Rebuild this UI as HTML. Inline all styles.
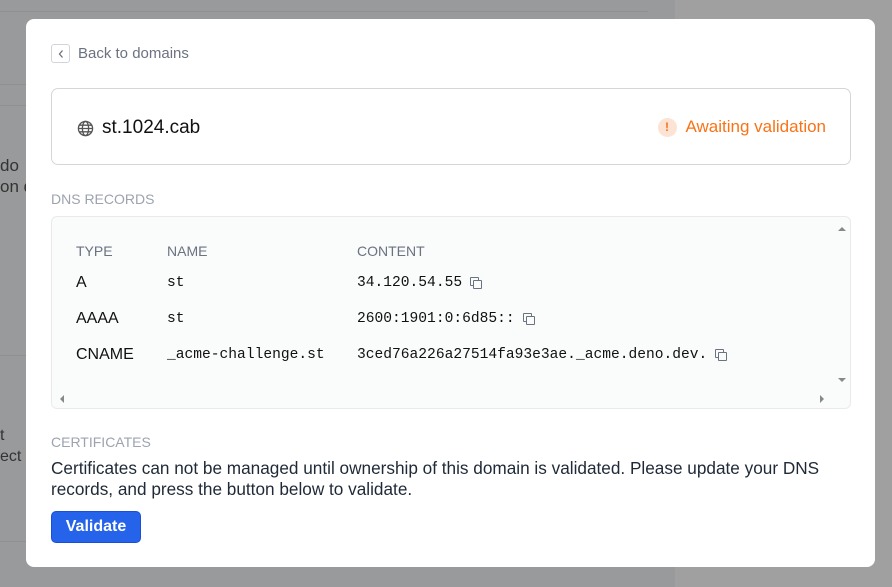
<!DOCTYPE html>
<html><head><style>
*{box-sizing:border-box;margin:0;padding:0}
body{width:892px;height:587px;overflow:hidden;background:#999a9b;font-family:"Liberation Sans",sans-serif;position:relative}
.bgl{position:absolute;background:#8f9091;height:1px;left:0}
.modal{position:absolute;left:26px;top:19px;width:849px;height:548px;background:#fff;border-radius:8px}
.back{position:absolute;left:25px;top:25px;display:flex;align-items:center;color:#6b7280;font-size:15px}
.back .b{width:19px;height:19px;border:1px solid #d1d5db;border-radius:3px;margin-right:8px;display:flex;align-items:center;justify-content:center}
.card{position:absolute;left:25px;top:69px;width:800px;height:77px;border:1px solid #d4d6da;border-radius:7px}
.dom{position:absolute;left:25px;top:28px;display:flex;align-items:center;font-size:19px;color:#111}
.stat{position:absolute;right:24px;top:28px;display:flex;align-items:center;color:#f97316;font-size:17px}
.stat .c{width:19px;height:19px;border-radius:50%;background:#fde3d3;color:#f97316;font-size:12px;font-weight:bold;display:flex;align-items:center;justify-content:center;margin-right:9px}
.lbl{position:absolute;left:25px;color:#9ca3af;font-size:14px}
.tbl{position:absolute;left:25px;top:197px;width:800px;height:193px;background:#fafbfb;border:1px solid #e8eaec;border-radius:6px}
.tbl div{position:absolute;white-space:nowrap}
.h{color:#6b7280;font-size:14px;top:26px}
.m{font-family:"Liberation Mono","DejaVu Sans Mono",monospace;font-size:14.6px;color:#111}
.t{font-size:16px;color:#111}
.cp{display:inline-block;width:10px;height:10px;position:relative;margin-left:8px;vertical-align:-1px}
.cp:before,.cp:after{content:"";position:absolute;width:7px;height:7px;border:1px solid #6b7280;border-radius:1px;background:#fafbfb}
.cp:before{left:0;top:0}.cp:after{left:3px;top:3px}
.tri{position:absolute;width:0;height:0}
p.txt{position:absolute;left:25px;top:439px;width:790px;font-size:17.2px;line-height:21px;color:#1f2937}
.btn{position:absolute;left:25px;top:492px;width:90px;height:32px;background:#2563eb;border:1px solid #1d4ed8;border-radius:5px;color:#fff;font-size:16px;font-weight:bold;display:flex;align-items:center;justify-content:center}
</style></head><body>
<div class="bgl" style="top:11px;width:648px"></div>
<div class="bgl" style="top:84px;width:26px"></div>
<div class="bgl" style="top:105px;width:26px"></div>
<div class="bgl" style="top:355px;width:26px"></div>
<div class="bgl" style="top:541px;width:26px"></div>
<div style="position:absolute;left:675px;top:0;width:217px;height:587px;background:#a0a0a0"></div>
<div style="position:absolute;left:0;top:155px;font-size:17px;color:#333;line-height:21px">do<br>on d</div>
<div style="position:absolute;left:0;top:425px;font-size:16px;color:#333;line-height:21px">t<br>ect t</div>
<div class="modal">
<div class="back"><span class="b"><svg width="8" height="10" viewBox="0 0 8 10"><path d="M5.5 1.5L2.5 5l3 3.5" fill="none" stroke="#6b7280" stroke-width="1.3"/></svg></span>Back to domains</div>
<div class="card">
<div class="dom"><svg width="17" height="17" viewBox="0 0 18 18" style="margin-right:8px"><g fill="none" stroke="#555" stroke-width="1.4"><circle cx="9" cy="9" r="7.5"/><ellipse cx="9" cy="9" rx="3.3" ry="7.5"/><path d="M1.5 9h15M2.5 5.5h13M2.5 12.5h13"/></g></svg>st.1024.cab</div>
<div class="stat"><span class="c">!</span>Awaiting validation</div>
</div>
<div class="lbl" style="top:172px">DNS RECORDS</div>
<div class="tbl">
<div class="h" style="left:24px">TYPE</div><div class="h" style="left:115px">NAME</div><div class="h" style="left:305px">CONTENT</div>
<div class="t" style="left:24px;top:57px">A</div><div class="m" style="left:115px;top:58px">st</div><div class="m" style="left:305px;top:58px">34.120.54.55<span class="cp"></span></div>
<div class="t" style="left:24px;top:93px">AAAA</div><div class="m" style="left:115px;top:94px">st</div><div class="m" style="left:305px;top:94px">2600:1901:0:6d85::<span class="cp"></span></div>
<div class="t" style="left:24px;top:129px">CNAME</div><div class="m" style="left:115px;top:130px">_acme-challenge.st</div><div class="m" style="left:305px;top:130px">3ced76a226a27514fa93e3ae._acme.deno.dev.<span class="cp"></span></div>
<div class="tri" style="left:786px;top:10px;border:4px solid transparent;border-bottom:4px solid #888;border-top:0"></div>
<div class="tri" style="left:786px;top:161px;border:4px solid transparent;border-top:4px solid #888;border-bottom:0"></div>
<div class="tri" style="left:8px;top:178px;border:4px solid transparent;border-right:4px solid #888;border-left:0"></div>
<div class="tri" style="left:768px;top:178px;border:4px solid transparent;border-left:4px solid #888;border-right:0"></div>
</div>
<div class="lbl" style="top:415px">CERTIFICATES</div>
<p class="txt">Certificates can not be managed until ownership of this domain is validated. Please update your DNS records, and press the button below to validate.</p>
<div class="btn">Validate</div>
</div>
</body></html>
